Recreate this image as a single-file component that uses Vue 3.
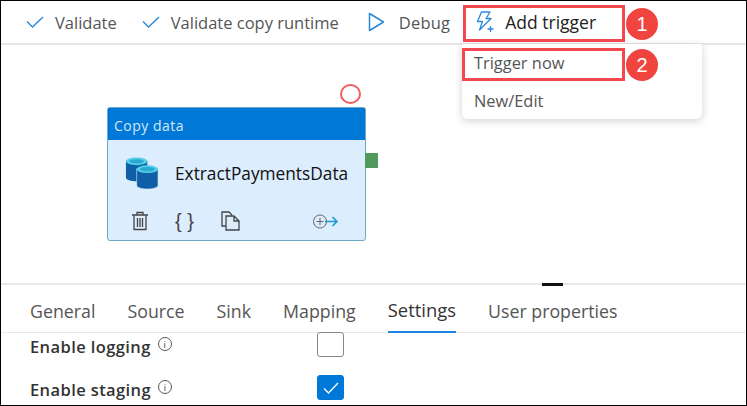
<script setup>
const tabs = ["General", "Source", "Sink", "Mapping", "Settings", "User properties"];
const activeTab = "Settings";
</script>

<template>
  <div class="frame">
    <header class="toolbar">
      <button class="tool tool-validate">
        <svg width="18" height="12" viewBox="0 0 18 12"><path d="M1 5.500 6.500 11 17 1" fill="none" stroke="#2b88d8" stroke-width="1.400" /></svg>
        <span>Validate</span>
      </button>
      <button class="tool tool-runtime">
        <svg width="18" height="12" viewBox="0 0 18 12"><path d="M1 5.500 6.500 11 17 1" fill="none" stroke="#2b88d8" stroke-width="1.400" /></svg>
        <span>Validate copy runtime</span>
      </button>
      <button class="tool tool-debug">
        <svg width="17" height="20" viewBox="0 0 17 20"><path d="M1.500 1.500v17L15.500 10z" fill="none" stroke="#2b88d8" stroke-width="1.500" stroke-linejoin="round" /></svg>
        <span>Debug</span>
      </button>
      <button class="tool tool-trigger">
        <svg width="22" height="22" viewBox="0 0 22 22">
          <path d="M6.500 1h8.500l-4 6.500h5L4.500 19l3-8.500H2.500z" fill="none" stroke="#2b88d8" stroke-width="1.300" stroke-linejoin="round" />
          <path d="M15.500 15v6M12.500 18h6" stroke="#2b88d8" stroke-width="1.300" />
        </svg>
        <span>Add trigger</span>
      </button>
    </header>

    <main class="canvas">
      <span class="status-ring"></span>
      <section class="activity">
        <div class="activity-title">Copy data</div>
        <div class="activity-body">
          <svg class="db-icon" width="34" height="35" viewBox="0 0 35 34">
            <path d="M1 4v17c0 2.500 5 4 11 4s11-1.500 11-4V4z" fill="#0f5fa8" />
            <ellipse cx="12" cy="4.500" rx="11" ry="4" fill="#54cfe8" />
            <ellipse cx="12" cy="4.500" rx="7.500" ry="2.200" fill="#2aa8d0" />
            <path d="M12 12v17c0 2.500 5 4 11 4s11-1.500 11-4V12z" fill="#0f5fa8" stroke="#dcefff" stroke-width="0.600" />
            <ellipse cx="23" cy="12.500" rx="11" ry="4" fill="#54cfe8" />
            <ellipse cx="23" cy="12.500" rx="7.500" ry="2.200" fill="#2aa8d0" />
          </svg>
          <span class="activity-name">ExtractPaymentsData</span>
        </div>
        <div class="activity-actions">
          <svg width="18" height="20" viewBox="0 0 18 20" fill="none" stroke="#444" stroke-width="1.300">
            <path d="M1 4h16M6 4V1.500h6V4M3 4v14.500h12V4M6.500 7v9M9 7v9M11.500 7v9" />
          </svg>
          <span class="braces">{ }</span>
          <svg width="19" height="20" viewBox="0 0 19 20" fill="none" stroke="#444" stroke-width="1.300">
            <path d="M5 15H1V1h7l3 3M5 5h8l5 5v9H5zM13 5v5h5" />
          </svg>
          <svg class="add-output" width="27" height="15" viewBox="0 0 27 15" fill="none">
            <circle cx="8" cy="7.500" r="6.500" stroke="#666" />
            <path d="M8 4v7M4.500 7.500h7" stroke="#666" />
            <path d="M13 7.500h12M20.500 3l4.500 4.500-4.500 4.500" stroke="#1e9bc9" stroke-width="1.600" />
          </svg>
        </div>
        <span class="output-port"></span>
      </section>
    </main>

    <section class="panel">
      <span class="panel-grip"></span>
      <nav class="tabs">
        <a v-for="tab in tabs" :key="tab" class="tab" :class="{ active: tab === activeTab }">{{ tab }}</a>
      </nav>
      <div class="form-row row-logging">
        <label class="form-label">Enable logging<i class="info">i</i></label>
        <span class="checkbox"></span>
      </div>
      <div class="form-row row-staging">
        <label class="form-label">Enable staging<i class="info">i</i></label>
        <span class="checkbox checked">
          <svg width="18" height="14" viewBox="0 0 18 14"><path d="M2 7.500 6.500 12 16 2" fill="none" stroke="#fff" stroke-width="1.400" /></svg>
        </span>
      </div>
    </section>

    <div class="menu">
      <div class="menu-item">Trigger now</div>
      <div class="menu-item">New/Edit</div>
    </div>

    <span class="callout callout-trigger"></span>
    <span class="callout callout-now"></span>
    <span class="badge badge-one">1</span>
    <span class="badge badge-two">2</span>
  </div>
</template>

<style>
html,
body {
  margin: 0;
  background: #fff;
}
</style>

<style scoped>
.frame {
  position: relative;
  box-sizing: border-box;
  width: 747px;
  height: 406px;
  display: flex;
  flex-direction: column;
  overflow: hidden;
  border: 1px solid #000;
  background: #fff;
  font-family: "Open Sans", "Noto Sans", sans-serif;
  color: #444;
}

.toolbar {
  height: 42px;
  flex: none;
  display: flex;
  align-items: center;
  border-bottom: 2px solid #e6e6e6;
}

.tool {
  display: flex;
  align-items: center;
  padding: 0;
  border: 0;
  background: none;
  font: inherit;
  font-size: 16.500px;
  color: #555;
}

.tool-validate {
  margin-left: 25px;
  gap: 11px;
}

.tool-runtime {
  margin-left: 25px;
  gap: 11px;
}

.tool-debug {
  margin-left: 29px;
  gap: 14px;
  letter-spacing: 0.2px;
}

.tool-trigger {
  margin-left: 25px;
  gap: 8px;
  color: #222;
  font-size: 17.500px;
}

.canvas {
  position: relative;
  flex: 1;
}

.status-ring {
  position: absolute;
  left: 339px;
  top: 39px;
  box-sizing: border-box;
  width: 21px;
  height: 20px;
  border: 2px solid #f25c5c;
  border-radius: 50%;
}

.activity {
  position: absolute;
  left: 106px;
  top: 62px;
  box-sizing: border-box;
  width: 259px;
  height: 134px;
  display: flex;
  flex-direction: column;
  border: 1.500px solid #6fa8c4;
  border-radius: 3px;
  background: #dcedfd;
}

.activity-title {
  height: 32px;
  flex: none;
  padding-left: 6px;
  line-height: 35px;
  background: #0078d7;
  color: #d5e8f8;
  font-size: 14px;
  letter-spacing: 0.5px;
}

.activity-body {
  display: flex;
  align-items: center;
  height: 66px;
  padding-left: 17px;
  gap: 16px;
}

.activity-name {
  color: #111;
  font-size: 17.300px;
}

.activity-actions {
  display: flex;
  align-items: center;
  padding-left: 23px;
  margin-top: 5px;
}

.braces {
  margin-left: 26px;
  margin-right: 27px;
  font-family: "Liberation Sans", sans-serif;
  font-size: 20px;
  line-height: 20px;
  color: #444;
}

.add-output {
  margin-left: 72px;
}

.output-port {
  position: absolute;
  right: -13px;
  top: 45px;
  width: 13px;
  height: 15px;
  background: #4f9a5c;
}

.panel {
  position: relative;
  height: 120px;
  flex: none;
  border-top: 2px solid #e8e8e8;
}

.panel-grip {
  position: absolute;
  left: 541px;
  top: -2px;
  width: 21px;
  height: 3px;
  background: #111;
}

.tabs {
  height: 48px;
  box-sizing: border-box;
  display: flex;
  gap: 32px;
  padding-left: 29px;
  border-bottom: 1px solid #e8e8e8;
}

.tab {
  display: flex;
  align-items: center;
  height: 48px;
  box-sizing: border-box;
  padding-top: 3px;
  font-size: 17.800px;
  color: #555;
}

.tab.active {
  color: #333;
  font-size: 18.400px;
  font-weight: 500;
  border-bottom: 2px solid #1c86e0;
}

.form-row {
  display: flex;
  align-items: center;
  padding-left: 29px;
  height: 27px;
}

.row-logging {
  margin-top: -2px;
}

.row-staging {
  margin-top: 16px;
}

.form-label {
  width: 287px;
  flex: none;
  padding-top: 3px;
  color: #333;
  font-size: 16.500px;
  font-weight: 600;
  letter-spacing: 0.4px;
}

.info {
  display: inline-flex;
  align-items: center;
  justify-content: center;
  width: 14px;
  height: 14px;
  margin-left: 7px;
  border: 1px solid #555;
  border-radius: 50%;
  box-sizing: border-box;
  vertical-align: 5px;
  font-style: normal;
  font-size: 9px;
  font-weight: 400;
  line-height: 1;
}

.checkbox {
  box-sizing: border-box;
  width: 27px;
  height: 25px;
  display: flex;
  align-items: center;
  justify-content: center;
  border: 1px solid #888;
  border-radius: 3px;
}

.checkbox.checked {
  border-color: #0078d7;
  background: #0078d7;
}

.menu {
  position: absolute;
  left: 461px;
  top: 43px;
  width: 240px;
  height: 75px;
  border-radius: 0 0 6px 6px;
  background: #fff;
  box-shadow: 0 2px 8px rgba(0, 0, 0, 0.18);
}

.menu-item {
  height: 38px;
  padding-left: 12px;
  line-height: 38px;
  font-size: 16.400px;
  color: #555;
}

.callout {
  position: absolute;
  box-sizing: border-box;
  border: 3px solid #f2494f;
}

.callout-trigger {
  left: 462px;
  top: 4px;
  width: 162px;
  height: 37px;
}

.callout-now {
  left: 461px;
  top: 47px;
  width: 163px;
  height: 33px;
}

.badge {
  position: absolute;
  width: 32px;
  height: 32px;
  border-radius: 50%;
  background: #f0453f;
  color: #fff;
  text-align: center;
  font-size: 20px;
  line-height: 32px;
  font-family: "Liberation Sans", sans-serif;
}

.badge-one {
  left: 625px;
  top: 7px;
}

.badge-two {
  left: 625px;
  top: 48px;
}
</style>
